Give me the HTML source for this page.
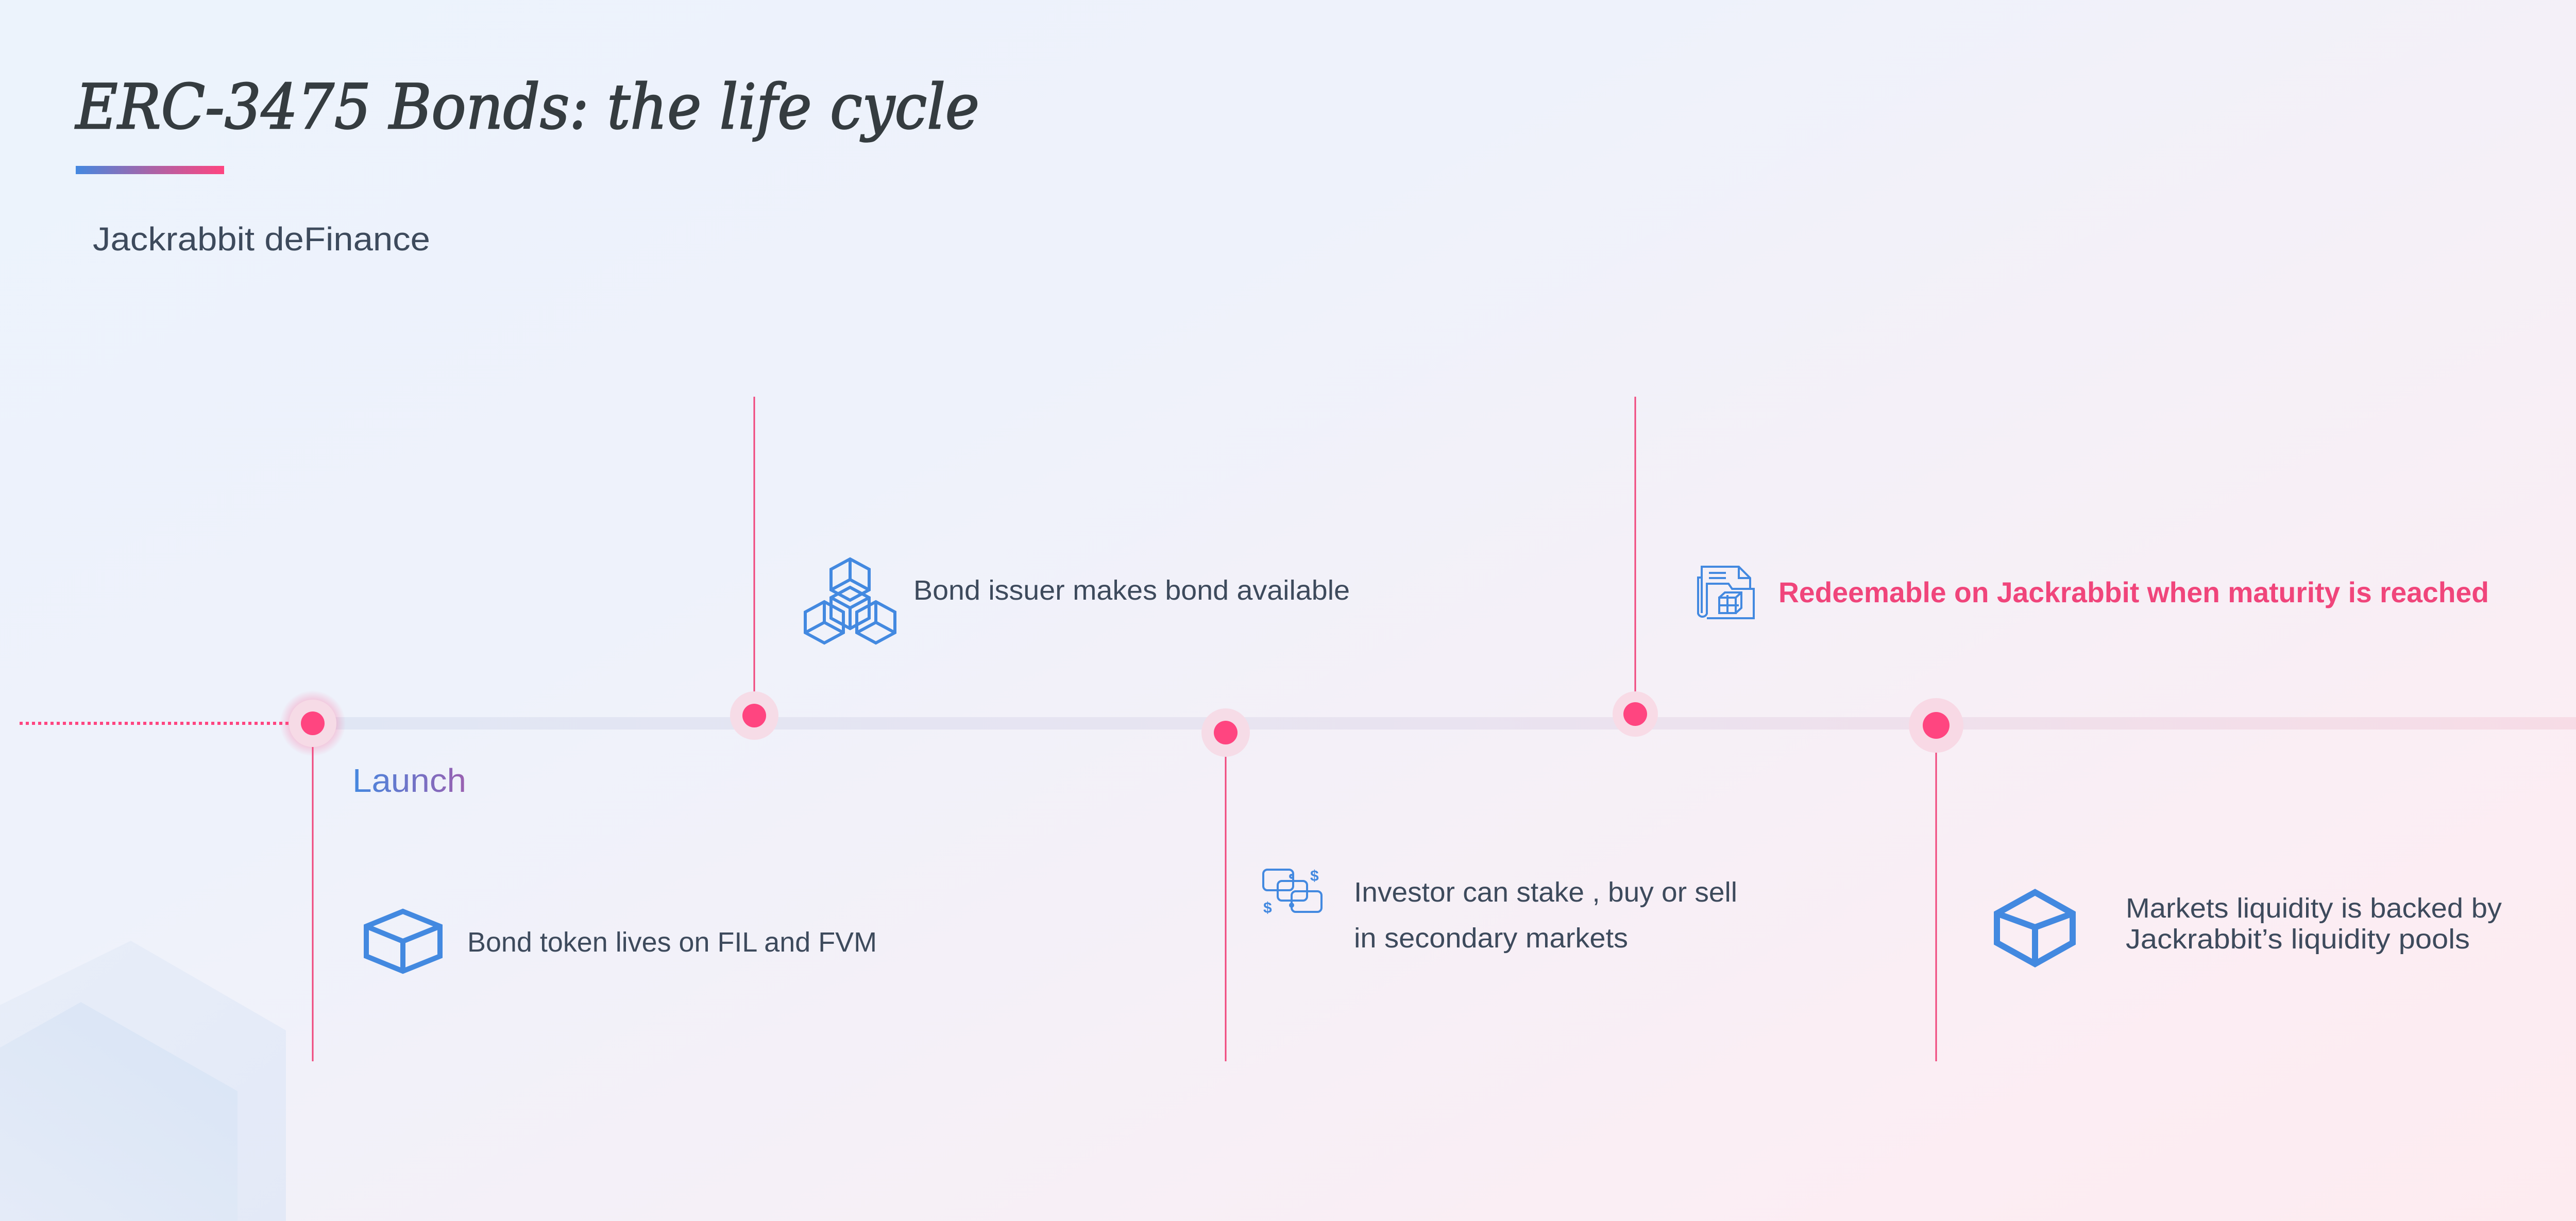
<!DOCTYPE html>
<html><head><meta charset="utf-8"><style>
html,body{margin:0;padding:0;width:5025px;height:2370px;overflow:hidden}
body{background:linear-gradient(150deg,#ecf3fc 0%,#eef2fb 35%,#f5f0f7 60%,#fcedf3 85%,#fdebf0 100%)}
svg{position:absolute;left:0;top:0}
text{font-family:"Liberation Sans",sans-serif}
</style></head><body>
<svg width="5025" height="2370" viewBox="0 0 5025 2370" xmlns="http://www.w3.org/2000/svg">
<defs>
<linearGradient id="bar" x1="0" x2="1"><stop offset="0" stop-color="#4488e0"/><stop offset="0.5" stop-color="#a864a8"/><stop offset="1" stop-color="#ff4580"/></linearGradient>
<linearGradient id="tl" x1="0" x2="1"><stop offset="0" stop-color="#e0e6f4"/><stop offset="0.5" stop-color="#e9e3f0"/><stop offset="1" stop-color="#f7dce6"/></linearGradient>
<linearGradient id="launch" x1="0" x2="1"><stop offset="0" stop-color="#4488e0"/><stop offset="1" stop-color="#9a60b0"/></linearGradient>
<linearGradient id="hex1" x1="0" y1="0" x2="1" y2="1"><stop offset="0" stop-color="#e8eef9"/><stop offset="1" stop-color="#e3e9f7"/></linearGradient>
<linearGradient id="hex2" x1="1" y1="0" x2="0" y2="1"><stop offset="0" stop-color="#d8e4f5"/><stop offset="1" stop-color="#e6ecf8"/></linearGradient>
<radialGradient id="glow"><stop offset="0.5" stop-color="#ff4580" stop-opacity="0.4"/><stop offset="1" stop-color="#ff4580" stop-opacity="0"/></radialGradient>
</defs>

<polygon points="254,1826 555,2000 555,2370 -100,2370 -100,2000" fill="url(#hex1)"/>
<polygon points="157,1945 461,2118 461,2370 -150,2370 -150,2118" fill="url(#hex2)"/>

<text x="147" y="249" font-style="italic" font-size="120" fill="#353c40" stroke="#353c40" stroke-width="2.5" textLength="1754" lengthAdjust="spacingAndGlyphs" style="font-family:'DejaVu Serif',serif">ERC-3475 Bonds: the life cycle</text>
<rect x="147" y="322" width="288" height="16" fill="url(#bar)"/>
<text x="180" y="486" font-size="64" fill="#3d4a5c" textLength="655" lengthAdjust="spacingAndGlyphs">Jackrabbit deFinance</text>

<rect x="607" y="1392" width="4418" height="24" fill="url(#tl)"/>
<line x1="38" y1="1404" x2="590" y2="1404" stroke="#ff4580" stroke-width="6" stroke-dasharray="6 6"/>

<g stroke="#f0457b" stroke-width="3">
<line x1="607" y1="1404" x2="607" y2="2060"/>
<line x1="1464" y1="770" x2="1464" y2="1389"/>
<line x1="2379" y1="1422" x2="2379" y2="2060"/>
<line x1="3174" y1="770" x2="3174" y2="1386"/>
<line x1="3758" y1="1408" x2="3758" y2="2060"/>
</g>

<circle cx="607" cy="1404" r="64" fill="url(#glow)"/>
<circle cx="607" cy="1404" r="46" fill="#f6dbe6"/>
<circle cx="607" cy="1404" r="23" fill="#ff4580"/>
<circle cx="1464" cy="1389" r="47" fill="#f6dce7"/>
<circle cx="1464" cy="1389" r="23" fill="#ff4580"/>
<circle cx="2379" cy="1422" r="47" fill="#f6dce7"/>
<circle cx="2379" cy="1422" r="23" fill="#ff4580"/>
<circle cx="3174" cy="1386" r="44" fill="#f8dbe6"/>
<circle cx="3174" cy="1386" r="23" fill="#ff4580"/>
<circle cx="3758" cy="1408" r="53" fill="#f8d9e5"/>
<circle cx="3758" cy="1408" r="26" fill="#ff4580"/>

<text x="684" y="1537" font-size="64" fill="url(#launch)" textLength="221" lengthAdjust="spacingAndGlyphs">Launch</text>
<g fill="#3d4a5c" font-size="54">
<text x="1773" y="1164" textLength="847" lengthAdjust="spacingAndGlyphs">Bond issuer makes bond available</text>
<text x="907" y="1847" textLength="795" lengthAdjust="spacingAndGlyphs">Bond token lives on FIL and FVM</text>
<text x="2628" y="1750" textLength="744" lengthAdjust="spacingAndGlyphs">Investor can stake , buy or sell</text>
<text x="2628" y="1839" textLength="532" lengthAdjust="spacingAndGlyphs">in secondary markets</text>
<text x="4126" y="1781" textLength="730" lengthAdjust="spacingAndGlyphs">Markets liquidity is backed by</text>
<text x="4126" y="1841" textLength="668" lengthAdjust="spacingAndGlyphs">Jackrabbit’s liquidity pools</text>
</g>
<text x="3452" y="1169" font-size="56" font-weight="bold" fill="#f0457b" textLength="1379" lengthAdjust="spacingAndGlyphs">Redeemable on Jackrabbit when maturity is reached</text>

<g fill="none" stroke="#4389e0" stroke-linejoin="miter">
<g stroke-width="10">
<polygon points="782,1769 854,1798 854,1856 782,1885 711,1856 711,1798"/>
<polyline points="711,1798 782,1827 854,1798"/><line x1="782" y1="1827" x2="782" y2="1885"/>
</g>
<g stroke-width="12">
<polygon points="3950,1732 4023,1773 4023,1830 3950,1871 3876,1830 3876,1773"/>
<polyline points="3876,1773 3950,1800 4023,1773"/><line x1="3950" y1="1800" x2="3950" y2="1871"/>
</g>
<g stroke-width="6">
<polygon points="1650,1085 1687,1105 1687,1145 1650,1165 1613,1145 1613,1105"/>
<polyline points="1650,1085 1650,1125"/><polyline points="1613,1145 1650,1125 1687,1145"/>
<polygon points="1650,1140 1687,1160 1687,1200 1650,1220 1613,1200 1613,1160"/>
<polyline points="1613,1160 1650,1180 1687,1160"/><line x1="1650" y1="1180" x2="1650" y2="1220"/>
<polygon points="1600,1168 1637,1188 1637,1228 1600,1248 1563,1228 1563,1188"/>
<line x1="1600" y1="1168" x2="1600" y2="1208"/><polyline points="1563,1228 1600,1208 1637,1228"/>
<polygon points="1700,1168 1737,1188 1737,1228 1700,1248 1663,1228 1663,1188"/>
<line x1="1700" y1="1168" x2="1700" y2="1208"/><polyline points="1663,1228 1700,1208 1737,1228"/>
</g>
<g stroke-width="4">
<rect x="2452" y="1688" width="58" height="40" rx="8"/>
<rect x="2480" y="1710" width="57" height="38" rx="8"/>
<rect x="2507" y="1730" width="58" height="40" rx="8"/>
<circle cx="2507" cy="1701" r="3"/><circle cx="2507" cy="1757" r="3"/>
</g>
<g stroke-width="4">
<polyline points="3303,1190 3303,1100 3375,1100 3397,1122 3397,1143"/>
<polyline points="3375,1100 3375,1122 3397,1122"/>
<path d="M3303,1121 h-7 v70 a9,9 0 0 0 17,0 v-58 h42 l7,10 h42 v57 h-91"/>
<line x1="3317" y1="1112" x2="3350" y2="1112"/><line x1="3317" y1="1122" x2="3350" y2="1122"/>
<rect x="3337" y="1160" width="32" height="30"/><polyline points="3337,1160 3348,1150 3380,1150 3380,1180 3369,1190"/><line x1="3369" y1="1160" x2="3380" y2="1150"/>
<line x1="3353" y1="1155" x2="3353" y2="1190"/><line x1="3337" y1="1175" x2="3375" y2="1175"/>
</g>
</g>
<g fill="#4389e0" font-size="30" font-weight="bold">
<text x="2543" y="1710">$</text><text x="2452" y="1772">$</text>
</g>
</svg>
</body></html>
